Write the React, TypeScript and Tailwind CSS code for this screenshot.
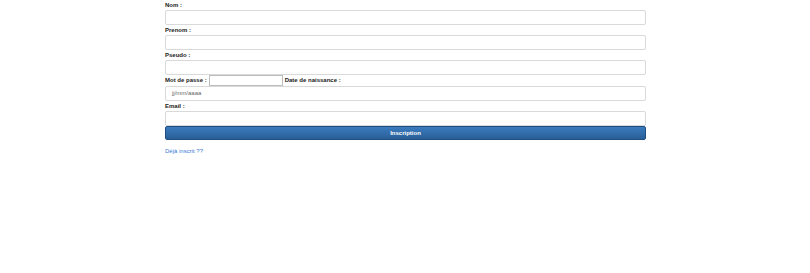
import React from "react";

function Label({ children }: { children: React.ReactNode }) {
  return <label className="block h-[10px] text-[6px] font-bold leading-[10px] text-[#222]">{children}</label>;
}

function Field() {
  return <div className="h-[15px] w-full rounded-[2px] border border-[#d9d9d9] bg-white" />;
}

export default function App() {
  return (
    <div className="h-[273px] w-[810px] bg-white font-['Liberation_Sans',Arial,sans-serif]">
      <form className="ml-[165px] flex w-[481px] flex-col">
        <Label>Nom :</Label>
        <Field />
        <Label>Prenom :</Label>
        <Field />
        <Label>Pseudo :</Label>
        <Field />
        {/* password + birth date */}
        <div className="flex h-[11px] items-center">
          <span className="text-[6px] font-bold text-[#222]">Mot de passe :</span>
          <div className="ml-[2px] h-[11px] w-[74px] border border-[#bdbdbd] bg-white" />
          <span className="ml-[2px] text-[6px] font-bold text-[#222]">Date de naissance :</span>
        </div>
        <div className="flex h-[15px] w-full items-center rounded-[2px] border border-[#d9d9d9] bg-white pl-[6px] text-[6px] text-[#666]">
          jj/mm/aaaa
        </div>
        <Label>Email :</Label>
        <Field />
        <button
          type="button"
          className="h-[14px] w-full rounded-[2px] border border-[#1f4e80] bg-gradient-to-b from-[#3a7bbf] to-[#2a5f97] text-[6px] font-bold text-white"
        >
          Inscription
        </button>
        <a className="mt-[7px] text-[6px] text-[#3a7bd5]">Déjà inscrit ??</a>
      </form>
    </div>
  );
}
